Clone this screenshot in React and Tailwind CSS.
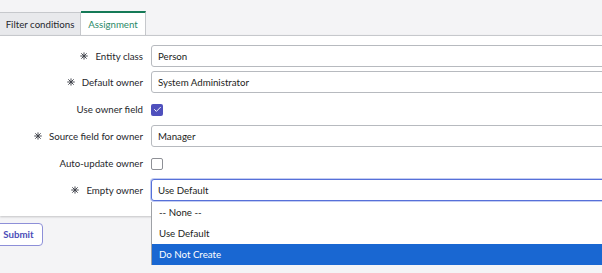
import { Check } from "lucide-react";

function Req() {
  return (
    <svg width="8" height="8" viewBox="0 0 10 10" className="mr-[7px] shrink-0">
      <g stroke="#3f424a" strokeWidth="1.2" strokeLinecap="round">
        <line x1="0.8" y1="5" x2="9.2" y2="5" />
        <line x1="5" y1="1" x2="5" y2="9" />
        <line x1="2" y1="2" x2="8" y2="8" />
        <line x1="8" y1="2" x2="2" y2="8" />
      </g>
    </svg>
  );
}

function Label({ text, required }) {
  return (
    <div className="w-[143px] shrink-0 flex items-center justify-end text-[9.7px] text-[#26272c]">
      {required && <Req />}
      <span>{text}</span>
    </div>
  );
}

function TextRow({ label, value, required, focused }) {
  return (
    <div className="flex items-center h-[22px]">
      <Label text={label} required={required} />
      <div
        className={
          focused
            ? "ml-[8px] flex-1 h-[22px] -mr-[10px] rounded-[3px] border border-[#5670d9] shadow-[0_0_0_1px_rgba(86,112,217,0.35)] flex items-center pl-[6px] text-[9.7px] text-[#1c1d21] bg-white"
            : "ml-[8px] flex-1 h-[22px] -mr-[10px] rounded-[3px] border border-[#b7babf] flex items-center pl-[6px] text-[9.7px] text-[#1c1d21] bg-white"
        }
      >
        {value}
      </div>
    </div>
  );
}

function CheckRow({ label, checked }) {
  return (
    <div className="flex items-center h-[24px]">
      <Label text={label} />
      <div className="ml-[8px] pt-[1px]">
        {checked ? (
          <div className="w-[12px] h-[12px] rounded-[2px] bg-[#4f50bd] flex items-center justify-center">
            <Check size={9} strokeWidth={2.5} color="#ffffff" />
          </div>
        ) : (
          <div className="w-[12px] h-[12px] rounded-[2px] border border-[#8e9096] bg-white" />
        )}
      </div>
    </div>
  );
}

export default function App() {
  return (
    <div
      className="w-[602px] h-[273px] overflow-hidden bg-[#f4f4f6]"
      style={{ fontFamily: "Lato, 'Open Sans', sans-serif" }}
    >
      {/* Tabs */}
      <div className="flex items-end h-[35px] pt-[11px]">
        <div className="h-[23px] w-[82px] -ml-[1px] flex items-center justify-center bg-[#e8e9ec] border border-b-0 border-[#c6c8cc] text-[9.7px] text-[#26272c]">
          Filter conditions
        </div>
        <div className="h-[24px] w-[65px] flex items-center justify-center bg-white border-t-2 border-t-[#157a57] border-r border-r-[#c6c8cc] text-[9.7px] text-[#2b8a68]">
          Assignment
        </div>
      </div>

      {/* Panel */}
      <div className="relative bg-white border-t border-[#c6c8cc] h-[181px] pt-[9px] shadow-[0_1px_2px_rgba(0,0,0,0.2)]">
        <div className="flex flex-col gap-[4px]">
          <TextRow label="Entity class" value="Person" required />
          <TextRow label="Default owner" value="System Administrator" required />
          <CheckRow label="Use owner field" checked />
          <TextRow label="Source field for owner" value="Manager" required />
          <CheckRow label="Auto-update owner" />
          <TextRow label="Empty owner" value="Use Default" required focused />
        </div>

        {/* Open select list */}
        <div className="absolute left-[151px] top-[166px] w-[460px] bg-white border-l border-[#9ea1a6] z-10 text-[9.7px] text-[#1c1d21]">
          <div className="h-[21px] flex items-center pl-[7px]">-- None --</div>
          <div className="h-[21px] flex items-center pl-[7px]">Use Default</div>
          <div className="h-[21px] flex items-center pl-[7px] bg-[#1967d2] text-white">Do Not Create</div>
        </div>
      </div>

      {/* Submit */}
      <div className="flex pt-[7px]">
        <button className="-ml-[6px] h-[23px] w-[49px] rounded-[4px] border border-[#8d8fd8] bg-white text-[9.7px] font-bold text-[#4b4db8]">
          Submit
        </button>
      </div>
    </div>
  );
}
